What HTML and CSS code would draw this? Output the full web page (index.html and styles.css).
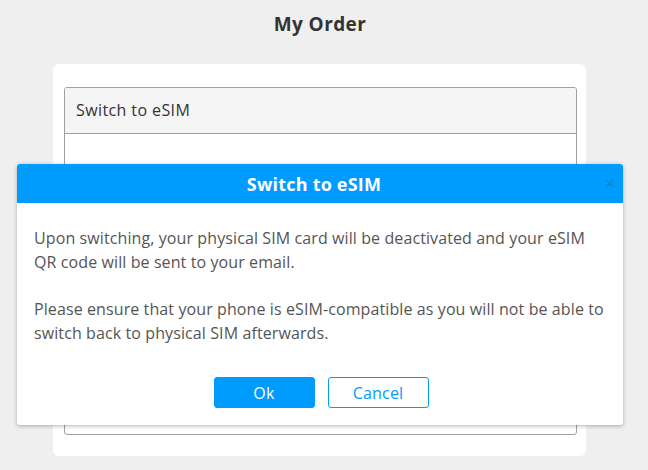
FILE: index.html
```html
<!DOCTYPE html>
<html>
<head>
<meta charset="utf-8">
<link rel="stylesheet" href="styles.css">
</head>
<body>
<div class="page">
  <h1 class="title">My Order</h1>
  <div class="card">
    <div class="panel">
      <div class="panel-head">Switch to eSIM</div>
      <div class="panel-body"></div>
    </div>
  </div>
</div>
<div class="modal">
  <div class="modal-head">
    <span class="modal-title">Switch to eSIM</span>
    <span class="modal-close">&times;</span>
  </div>
  <div class="modal-body">
    <p>Upon switching, your physical SIM card will be deactivated and your eSIM QR code will be sent to your email.</p>
    <p>Please ensure that your phone is eSIM-compatible as you will not be able to switch back to physical SIM afterwards.</p>
    <div class="actions">
      <button class="btn btn-primary">Ok</button>
      <button class="btn btn-outline">Cancel</button>
    </div>
  </div>
</div>
</body>
</html>
```
FILE: styles.css
```css
html, body {
  margin: 0;
  padding: 0;
}
body {
  background: #efefef;
  font-family: "Open Sans", "Noto Sans", sans-serif;
  color: #333;
  width: 648px;
  height: 470px;
  overflow: hidden;
  position: relative;
}
.page {
  width: 640px;
}
.title {
  margin: 0;
  padding-top: 10px;
  height: 64px;
  box-sizing: border-box;
  text-align: center;
  font-size: 19px;
  font-weight: 700;
  letter-spacing: 0.4px;
  line-height: 28px;
  color: #333;
}
.card {
  margin-left: 53px;
  width: 533px;
  box-sizing: border-box;
  background: #fff;
  border-radius: 6px;
  padding: 23px 9px 21px 11px;
}
.panel {
  border: 1px solid #a0a0a0;
  border-radius: 3px;
  height: 348px;
  box-sizing: border-box;
  overflow: hidden;
}
.panel-head {
  background: #f5f5f5;
  height: 45px;
  border-bottom: 1px solid #a0a0a0;
  padding-left: 11px;
  font-size: 16px;
  letter-spacing: 0.4px;
  line-height: 44px;
  color: #333;
}
.modal {
  position: absolute;
  left: 17px;
  top: 164px;
  width: 606px;
  height: 261px;
  background: #fff;
  border-radius: 3px;
  box-shadow: 0 1px 4px rgba(0,0,0,0.3);
  overflow: hidden;
}
.modal-head {
  position: relative;
  height: 39px;
  background: #009bff;
  display: flex;
  align-items: center;
  justify-content: center;
  padding-right: 12px;
}
.modal-title {
  color: #fff;
  font-size: 18px;
  font-weight: 700;
  letter-spacing: 0.2px;
}
.modal-close {
  position: absolute;
  right: 8px;
  top: 9px;
  font-size: 18px;
  line-height: 20px;
  color: #1a7fc4;
  opacity: 0.8;
}
.modal-body {
  padding: 23px 17px 0 17px;
}
.modal-body p {
  margin: 0 0 23px 0;
  font-size: 16px;
  letter-spacing: 0.1px;
  line-height: 24px;
  color: #555;
}
.modal-body p:last-of-type {
  margin-bottom: 32px;
}
.actions {
  display: flex;
  justify-content: center;
  gap: 13px;
  padding-left: 2px;
}
.btn {
  width: 101px;
  height: 31px;
  border-radius: 3px;
  font-family: "Open Sans", "Noto Sans", sans-serif;
  font-size: 16px;
  letter-spacing: 0.2px;
  padding: 0;
  box-sizing: border-box;
}
.btn-primary {
  background: #009bff;
  border: 1px solid #009bff;
  color: #fff;
}
.btn-outline {
  background: #fff;
  border: 1px solid #009bff;
  color: #009bff;
}
```
